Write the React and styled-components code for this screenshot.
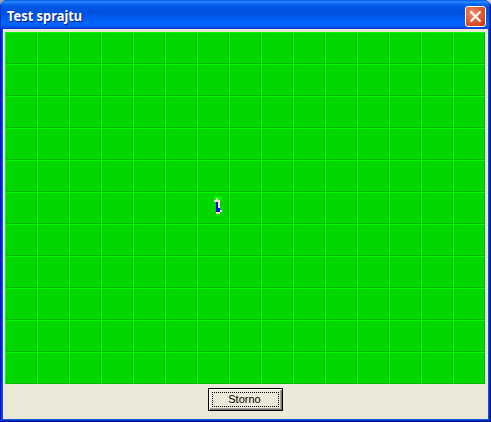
import React from "react";
import styled, { createGlobalStyle } from "styled-components";

const GlobalStyle = createGlobalStyle`
  html, body { margin: 0; padding: 0; overflow: hidden; background: #0831d9; }
`;

const Window = styled.main`
  box-sizing: border-box;
  width: 491px;
  height: 422px;
  display: flex;
  flex-direction: column;
  overflow: hidden;
  border-radius: 7px 7px 0 0;
  background: #0046e0;
`;

const Backdrop = styled.div`
  width: 491px;
  height: 422px;
  background: linear-gradient(90deg, #a5a5a5 0 50%, #d8d0c8 50%);
`;

const TitleBar = styled.header`
  box-sizing: border-box;
  height: 29px;
  flex: none;
  display: flex;
  align-items: center;
  justify-content: space-between;
  padding: 3px 5px 0 7px;
  background: linear-gradient(
    180deg,
    #0058e0 0px,
    #2b8cff 2px,
    #0b66f2 4px,
    #0055e2 7px,
    #0052e0 13px,
    #005cf4 19px,
    #0066ff 24px,
    #005bf0 26px,
    #003dd0 29px
  );
  box-shadow: inset 1px 0 #0831d9, inset -1px 0 #001ea0, inset -2px 0 #0038c8;
`;

const Title = styled.h1`
  margin: 0;
  color: #fff;
  font: bold 14px/18px "Noto Sans", "Open Sans", sans-serif;
  white-space: nowrap;
  text-shadow: 1px 1px #0a1883;
  transform: scaleX(${(p) => p.$stretch});
  transform-origin: left center;
`;

const CloseButton = styled.button`
  box-sizing: border-box;
  width: 21px;
  height: 21px;
  padding: 0;
  display: grid;
  place-items: center;
  border: 1px solid #fff;
  border-radius: 3px;
  background: radial-gradient(circle at 35% 30%, #ed9073 0%, #e3623e 40%, #d5461c 75%, #b93210 100%);
`;

const Frame = styled.div`
  box-sizing: border-box;
  flex: 1;
  display: flex;
  border: solid;
  border-width: 0 1px 1px 1px;
  border-color: #00138c #00138c #00138c #0019cf;
`;

const FrameMiddle = styled.div`
  flex: 1;
  display: flex;
  border: solid;
  border-width: 0 1px 1px 1px;
  border-color: #0030b8 #0030b8 #0030b8 #0831d9;
`;

const Client = styled.div`
  flex: 1;
  display: flex;
  flex-direction: column;
  align-items: flex-start;
  border: solid #0855dd;
  border-width: 0 1px 1px 1px;
  background: #ece9d8;
`;

const Field = styled.div`
  position: relative;
  flex: none;
  margin: 3px 0 0 2px;
  display: grid;
  grid-template-columns: repeat(15, 32px);
  grid-template-rows: repeat(11, 32px);
`;

const Tile = styled.div`
  background: #00d800;
  box-shadow: inset 1px 1px #00fc00, inset -1px -1px #00b400;
`;

const Sprite = styled.svg`
  position: absolute;
  left: 209px;
  top: 164px;
`;

const CancelButton = styled.button`
  box-sizing: border-box;
  width: 75px;
  height: 23px;
  margin: 4px 0 0 205px;
  padding: 2px;
  display: flex;
  border: 1px solid #000;
  border-radius: 0;
  background: #ece9d8;
  box-shadow: inset 1px 1px #fff, inset -1px -1px #716f64, inset -2px -2px #aca899;
  color: #000;
  font: 11px/13px "Liberation Sans", Arial, sans-serif;
`;

const FocusRing = styled.span`
  position: relative;
  box-sizing: border-box;
  width: 67px;
  height: 15px;
  margin: 1px;
  flex: none;
  text-align: center;
  padding: 1px 2px 0 0;
`;

const FocusDots = styled.svg`
  position: absolute;
  left: 0;
  top: 0;
`;

export default function App() {
  return (
    <Backdrop>
      <GlobalStyle />
      <Window>
        <TitleBar>
          <Title $stretch={0.92}>Test sprajtu</Title>
          <CloseButton aria-label="Close">
            <svg width="13" height="13" viewBox="0 0 13 13">
              <path d="M1.5 1.5L11.5 11.5M11.5 1.5L1.5 11.5" stroke="#fff" strokeWidth="2.2" />
            </svg>
          </CloseButton>
        </TitleBar>
        <Frame>
          <FrameMiddle>
            <Client>
              <Field>
                {Array.from({ length: 165 }, (_, i) => (
                  <Tile key={i} />
                ))}
                <Sprite width="8" height="18" viewBox="0 0 4 9" shapeRendering="crispEdges">
                  <path fill="#00f800" d="M0 0h4v2H0z" />
                  <path fill="#ffdcd0" d="M1 1h1v1h1v4H2V3H0V2h1zM3 7h1v1H3zM1 8h2v1H1z" />
                  <path fill="#0000f8" d="M1 3h1v3h1v2H1z" />
                </Sprite>
              </Field>
              <CancelButton>
                <FocusRing>
                  <FocusDots width="67" height="15" viewBox="0 0 67 15" shapeRendering="crispEdges">
                    <path
                      d="M0 .5H67M0 14.5H67M.5 0V15M66.5 0V15"
                      fill="none"
                      stroke="#000"
                      strokeDasharray="1 1"
                    />
                  </FocusDots>
                  Storno
                </FocusRing>
              </CancelButton>
            </Client>
          </FrameMiddle>
        </Frame>
      </Window>
    </Backdrop>
  );
}
